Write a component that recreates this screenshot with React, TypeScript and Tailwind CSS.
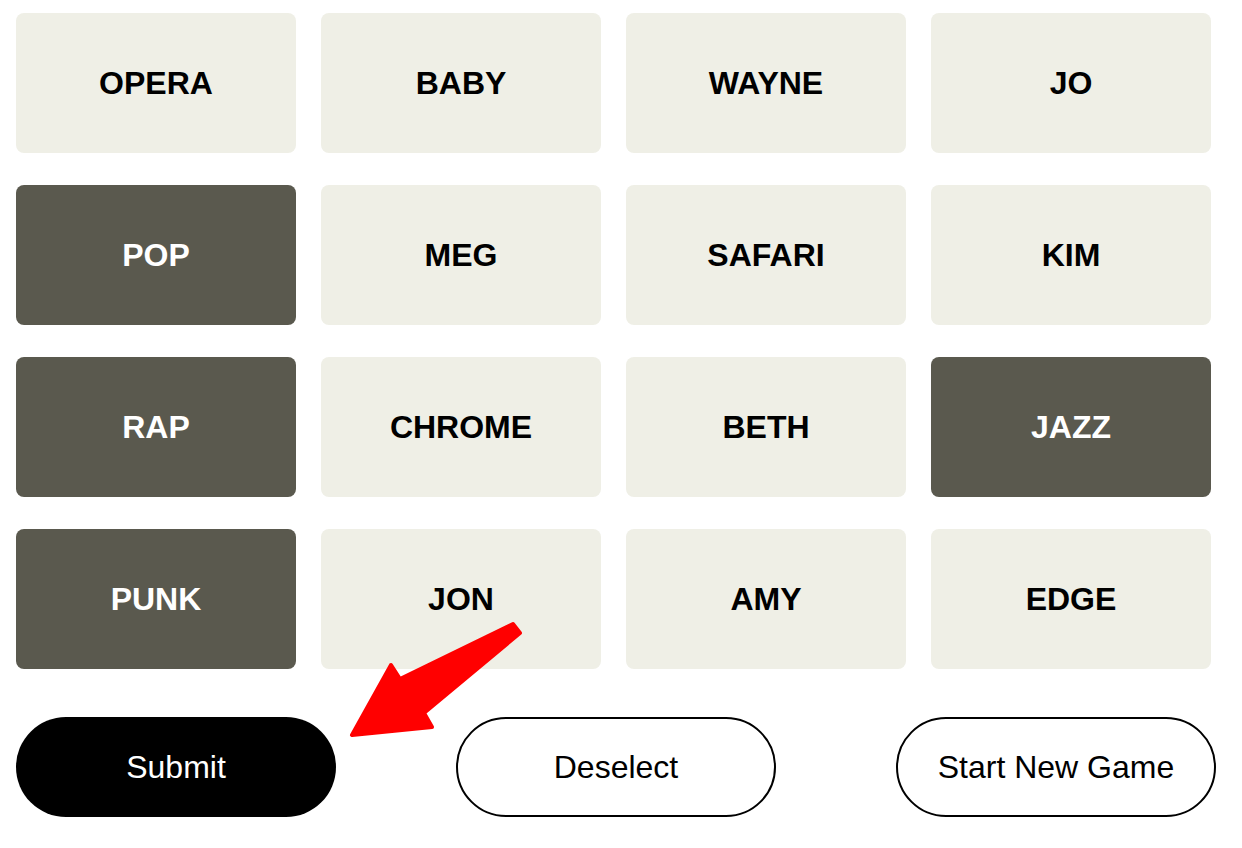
const words: { w: string; dark?: boolean }[] = [
  { w: "OPERA" },
  { w: "BABY" },
  { w: "WAYNE" },
  { w: "JO" },
  { w: "POP", dark: true },
  { w: "MEG" },
  { w: "SAFARI" },
  { w: "KIM" },
  { w: "RAP", dark: true },
  { w: "CHROME" },
  { w: "BETH" },
  { w: "JAZZ", dark: true },
  { w: "PUNK", dark: true },
  { w: "JON" },
  { w: "AMY" },
  { w: "EDGE" },
];

export default function App() {
  return (
    <div
      className="relative w-[1242px] h-[848px] bg-white overflow-hidden pl-4 pt-[13px]"
      style={{ fontFamily: '"Liberation Sans", Arial, sans-serif' }}
    >
      {/* grid */}
      <div className="grid grid-cols-[repeat(4,280px)] auto-rows-[140px] gap-x-[25px] gap-y-8">
        {words.map((t) => (
          <div
            key={t.w}
            className={
              t.dark
                ? "flex items-center justify-center rounded-lg bg-[#5a594e] text-white text-[32px] font-bold"
                : "flex items-center justify-center rounded-lg bg-[#efefe6] text-black text-[32px] font-bold"
            }
          >
            {t.w}
          </div>
        ))}
      </div>

      {/* buttons */}
      <div className="flex gap-[120px] mt-12">
        <button className="w-[320px] h-[100px] rounded-full bg-black text-white text-[32px]">
          Submit
        </button>
        <button className="w-[320px] h-[100px] rounded-full border-2 border-black bg-white text-black text-[32px]">
          Deselect
        </button>
        <button className="w-[320px] h-[100px] rounded-full border-2 border-black bg-white text-black text-[32px]">
          Start New Game
        </button>
      </div>

      {/* annotation arrow */}
      <svg className="absolute left-0 top-0 pointer-events-none" width="1242" height="848">
        <polygon
          points="513,624 400,679 391,665 352,735 432,727 424,713 520,633"
          fill="#ff0000"
          stroke="#ff0000"
          strokeWidth="4"
          strokeLinejoin="round"
        />
      </svg>
    </div>
  );
}
